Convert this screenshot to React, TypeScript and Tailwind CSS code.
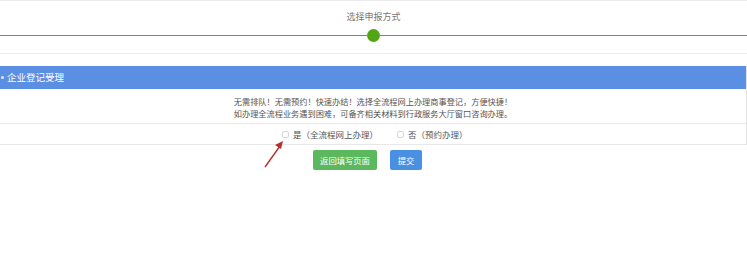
import React, { useState } from "react";

const font = { fontFamily: '"Noto Sans CJK SC", "Noto Sans", sans-serif' };

export default function App() {
  const [mode, setMode] = useState<"online" | "appoint" | null>(null);

  return (
    <div className="relative h-[277px] w-[747px] overflow-hidden bg-white" style={font}>
      <div className="border-t border-[#ececec]" />

      {/* step indicator */}
      <div className="h-[53px] border-b border-[#eeeeee]">
        <div className="pt-[9px] text-center text-[9px] leading-[14px] text-[#777]">选择申报方式</div>
        <div className="mt-[5px] flex items-center">
          <div className="h-px flex-1 bg-[#7b8c58]" />
          <div className="h-[13px] w-[13px] rounded-full bg-[#52a514]" />
          <div className="h-px flex-1 bg-[#7b8c58]" />
        </div>
      </div>

      <div className="mt-[12px] border-r border-[#e4e4e4]">
        {/* section header */}
        <div className="flex h-[23px] items-center bg-[#5b8fe3] pl-[1px] text-[9.5px] text-white">
          <span className="mr-[3px] h-[3px] w-[3px] rounded-full bg-white/80" />
          企业登记受理
        </div>

        {/* notice */}
        <div className="border-b border-[#e8e8e8] pt-[6px] pb-[4px] text-center text-[8.2px] leading-[12px] text-[#555]">
          <div>无需排队！无需预约！快速办结！选择全流程网上办理商事登记，方便快捷！</div>
          <div>如办理全流程业务遇到困难，可备齐相关材料到行政服务大厅窗口咨询办理。</div>
        </div>

        {/* options */}
        <div className="flex h-[21px] items-center border-b border-[#e8e8e8] pl-[282px] text-[8.5px] text-[#555]">
          <label className="flex items-center" onClick={() => setMode("online")}>
            <span className="h-[7px] w-[7px] rounded-[2px] border border-[#d6d6d6] bg-white" />
            <span className="ml-[4px]">是（全流程网上办理）</span>
          </label>
          <label className="ml-[19px] flex items-center" onClick={() => setMode("appoint")}>
            <span className="h-[7px] w-[7px] rounded-[2px] border border-[#d6d6d6] bg-white" />
            <span className="ml-[4px]">否（预约办理）</span>
          </label>
        </div>
      </div>

      {/* actions */}
      <div className="mt-[5px] flex pl-[313px]">
        <button className="h-[20px] w-[64px] rounded-[2px] bg-[#5cb85c] text-[8.3px] text-white">
          返回填写页面
        </button>
        <button className="ml-[13px] h-[20px] w-[32px] rounded-[2px] bg-[#4a90e2] text-[8.3px] text-white">
          提交
        </button>
      </div>

      {/* annotation arrow */}
      <svg className="absolute left-[260px] top-[136px]" width="30" height="36" viewBox="0 0 30 36">
        <line x1="5" y1="31" x2="20" y2="10" stroke="#b8302c" strokeWidth="1.4" />
        <polygon points="23,5 15,9 21,13" fill="#b8302c" />
      </svg>
      {mode && <span className="hidden">{mode}</span>}
    </div>
  );
}
